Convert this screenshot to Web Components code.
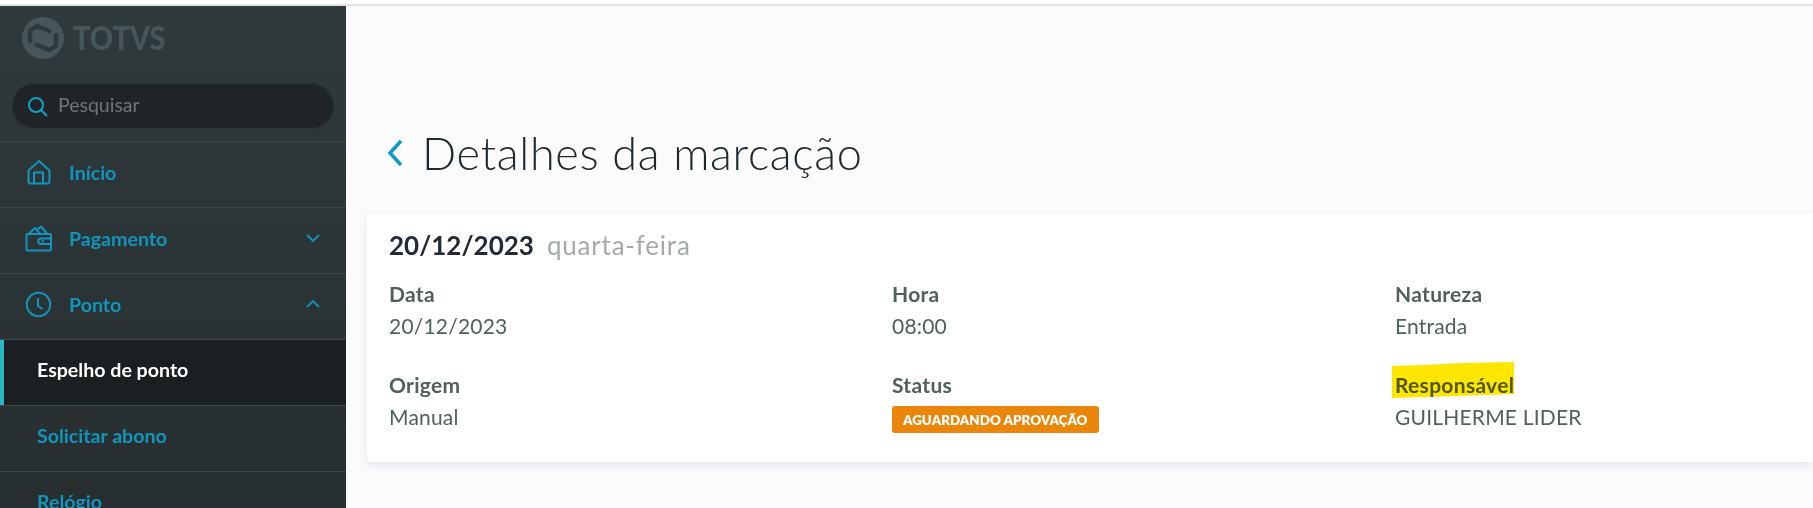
<!DOCTYPE html>
<html lang="pt-BR">
<head>
<meta charset="UTF-8">
<title>Detalhes da marcação</title>
<style>
  html, body { margin: 0; height: 100%; overflow: hidden; }
  body { font-family: "Lato", "Noto Sans", sans-serif; background: #fbfbfc; }
</style>
</head>
<body>
<app-shell>
  <side-menu slot="side">
    <menu-item label="Início" icon="home"></menu-item>
    <menu-item label="Pagamento" icon="wallet" chevron="down"></menu-item>
    <menu-item label="Ponto" icon="clock" chevron="up"></menu-item>
    <menu-item label="Espelho de ponto" sub active></menu-item>
    <menu-item label="Solicitar abono" sub></menu-item>
    <menu-item label="Relógio" sub></menu-item>
  </side-menu>
  <page-header title-text="Detalhes da marcação"></page-header>
  <detail-card date="20/12/2023" weekday="quarta-feira">
    <detail-field label="Data">20/12/2023</detail-field>
    <detail-field label="Hora">08:00</detail-field>
    <detail-field label="Natureza">Entrada</detail-field>
    <detail-field label="Origem">Manual</detail-field>
    <detail-field label="Status"><status-tag>AGUARDANDO APROVAÇÃO</status-tag></detail-field>
    <detail-field label="Responsável" marked>GUILHERME LIDER</detail-field>
  </detail-card>
</app-shell>

<script>
const icons = {
  home: '<path d="M3.500 11.500 14 2l10.500 9.500v11a2 2 0 0 1-2 2h-17a2 2 0 0 1-2-2z"/><path d="M9 24.500v-11h9v11"/>',
  wallet: '<path d="M25 9H3a1.500 1.500 0 0 0-1.500 1.500V24A1.500 1.500 0 0 0 3 25.500h21.500A1.500 1.500 0 0 0 26 24V10a1 1 0 0 0-1-1z"/><path d="M4 8.500 10 3l5 5.500M12 5l4-3.500 6 7"/><path d="M26 13.500h-10a2.500 2.500 0 0 0 0 5.500h10"/><path d="M17 16.200h2"/>',
  clock: '<circle cx="13.500" cy="13.500" r="11.700"/><path d="M13 7v8l4.500 3"/>'
};

class AppShell extends HTMLElement {
  constructor() {
    super();
    this.attachShadow({ mode: "open" }).innerHTML = `
      <style>
        :host { display: flex; flex-direction: column; height: 508px; }
        .top { height: 4px; background: #fff; border-bottom: 2px solid #e3e3e3; flex: none; }
        .row { display: flex; flex: 1; min-height: 0; }
        main { flex: 1; min-width: 0; padding-left: 21px; background: #fbfbfc; }
      </style>
      <div class="top"></div>
      <div class="row">
        <slot name="side"></slot>
        <main><slot></slot></main>
      </div>`;
  }
}

class SideMenu extends HTMLElement {
  constructor() {
    super();
    this.attachShadow({ mode: "open" }).innerHTML = `
      <style>
        :host { display: block; width: 346px; flex: none; overflow: hidden;
                background: linear-gradient(#2f3a3c, #272e30); }
        .logo { height: 65px; padding: 11px 0 0 22px; box-sizing: border-box; display: flex; gap: 9px; filter: blur(.5px); }
        .logo svg { width: 42px; height: 42px; flex: none; }
        .logo span { font: 900 32px/42px "Lato", sans-serif; color: #47565a; transform: scaleX(.9); transform-origin: left; }
        .search { height: 46px; margin: 12px; border-radius: 23px; background: #1f2527;
                  display: flex; align-items: center; padding-left: 15px; gap: 10px;
                  font-size: 19.500px; color: #6f7678; box-shadow: inset 0 0 0 1px #2a3234; }
        .search span { margin-top: -3px; }
        .search svg { width: 21px; height: 21px; flex: none; }
      </style>
      <div class="logo">
        <svg viewBox="-21 -21 42 42" fill="none" stroke="#2f3a3c" stroke-width="4.500">
          <circle r="21" fill="#47565a" stroke="none"/>
          <path d="M-13 5V-8L-6-12 8-6"/>
          <path d="M13-5V8L6 12-8 6"/>
        </svg>
        <span>TOTVS</span>
      </div>
      <div class="search">
        <svg viewBox="0 0 21 21" fill="none" stroke="#12a0c8" stroke-width="2"><circle cx="9" cy="9" r="7"/><path d="m14 14 6 6"/></svg>
        <span>Pesquisar</span>
      </div>
      <slot></slot>`;
  }
}

class MenuItem extends HTMLElement {
  constructor() {
    super();
    const sub = this.hasAttribute("sub");
    const icon = this.getAttribute("icon");
    const chevron = this.getAttribute("chevron");
    const path = chevron == "up" ? "M1 8 7 2l6 6" : "M1 2l6 6 6-6";
    this.attachShadow({ mode: "open" }).innerHTML = `
      <style>
        :host { display: flex; align-items: center; height: 60px; padding-bottom: 5px; border-top: 1px solid #3c4749;
                color: #1295bd; font-size: 19.600px; font-weight: 700; position: relative; }
        :host([sub]) { height: 59px; padding-bottom: 6px; }
        :host([active]) { background: #1a1f22; color: #fff; }
        :host([active])::before { content: ""; width: 4px; height: 100%; background: #29b6c5; position: absolute; left: 0; top: 0; }
        .ic { width: 27px; height: 27px; margin: 0 17px 0 25px; flex: none; }
        .lb { flex: 1; padding-left: ${sub ? "37px" : "0"}; }
        .ch { width: 14px; height: 10px; margin-right: 26px; }
      </style>
      ${icon ? `<svg class="ic" viewBox="0 0 27 27" fill="none" stroke="#1295bd" stroke-width="2" stroke-linejoin="round">${icons[icon]}</svg>` : ""}
      <span class="lb">${this.getAttribute("label")}</span>
      ${chevron ? `<svg class="ch" viewBox="0 0 14 10" fill="none" stroke="#1295bd" stroke-width="1.800"><path d="${path}"/></svg>` : ""}`;
  }
}

class PageHeader extends HTMLElement {
  constructor() {
    super();
    this.attachShadow({ mode: "open" }).innerHTML = `
      <style>
        :host { display: flex; align-items: center; height: 208px; padding: 86px 0 0 20px; box-sizing: border-box; }
        svg { width: 16px; height: 28px; margin-right: 19px; flex: none; }
        h1 { margin: 0; font: 300 45px/1.2 "Lato", sans-serif; color: #1f2a30; letter-spacing: .7px; }
      </style>
      <svg viewBox="0 0 16 28" fill="none" stroke="#0c9abe" stroke-width="3.500"><path d="M14 2 3 14l11 12"/></svg>
      <h1>${this.getAttribute("title-text")}</h1>`;
  }
}

class DetailCard extends HTMLElement {
  constructor() {
    super();
    this.attachShadow({ mode: "open" }).innerHTML = `
      <style>
        :host { display: block; height: 248px; box-sizing: border-box; background: #fff; border-radius: 4px 0 0 4px;
                padding: 15px 0 0 22px; box-shadow: 0 3px 8px rgba(120,125,160,.16); }
        .head { display: flex; align-items: baseline; gap: 13px; height: 50px; }
        b { font-size: 26px; font-weight: 700; color: #232a35; }
        span { font-size: 26px; color: #a2aaad; letter-spacing: .8px; }
        .grid { display: grid; grid-template-columns: 503px 503px 1fr; row-gap: 21px; }
      </style>
      <div class="head"><b>${this.getAttribute("date")}</b><span>${this.getAttribute("weekday")}</span></div>
      <div class="grid"><slot></slot></div>`;
  }
}

class DetailField extends HTMLElement {
  constructor() {
    super();
    this.attachShadow({ mode: "open" }).innerHTML = `
      <style>
        :host { display: block; position: relative; font-size: 21px; color: #51605f; height: 70px; }
        .lb { font-weight: 700; height: 31px; line-height: 30px; letter-spacing: .3px; }
        .val { line-height: 32px; letter-spacing: .2px; }
        svg { position: absolute; left: -3px; top: -8px; width: 122px; height: 36px; mix-blend-mode: multiply; }
      </style>
      <div class="lb">${this.getAttribute("label")}</div>
      <div class="val"><slot></slot></div>
      ${this.hasAttribute("marked") ? '<svg viewBox="0 0 122 36"><path d="M0 4 30 3 70 1 122 0V32L64 34 30 35 0 36z" fill="#ffe600"/></svg>' : ""}`;
  }
}

class StatusTag extends HTMLElement {
  constructor() {
    super();
    this.attachShadow({ mode: "open" }).innerHTML = `
      <style>
        :host { display: inline-flex; align-items: center; height: 27px; padding: 0 11px; margin-top: 5px; border-radius: 3px;
                background: #ea860a; color: #fff; font-size: 13.400px; font-weight: 800; vertical-align: top; letter-spacing: 0; }
      </style>
      <slot></slot>`;
  }
}

customElements.define("app-shell", AppShell);
customElements.define("side-menu", SideMenu);
customElements.define("menu-item", MenuItem);
customElements.define("page-header", PageHeader);
customElements.define("detail-card", DetailCard);
customElements.define("detail-field", DetailField);
customElements.define("status-tag", StatusTag);
</script>
</body>
</html>
